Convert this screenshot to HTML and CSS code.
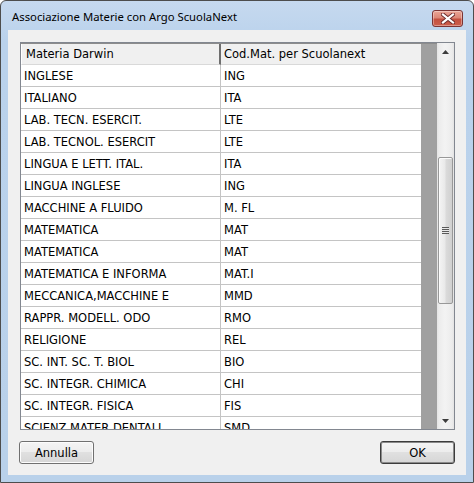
FILE: index.html
```html
<!DOCTYPE html>
<html>
<head>
<meta charset="utf-8">
<link rel="stylesheet" href="styles.css">
</head>
<body>
<div class="window">
  <div class="titlebar">
    <span class="title">Associazione Materie con Argo ScuolaNext</span>
    <div class="close">
      <svg width="14" height="11" viewBox="0 0 14 11">
        <path d="M2 1.5 L12 9.5 M12 1.5 L2 9.5" stroke="#6b2a2a" stroke-width="4" stroke-linecap="square" fill="none"/>
        <path d="M2 1.5 L12 9.5 M12 1.5 L2 9.5" stroke="#ffffff" stroke-width="2.2" stroke-linecap="square" fill="none"/>
      </svg>
    </div>
  </div>
  <div class="client">
    <div class="grid">
      <div class="table">
        <div class="head">
          <div class="hcell c1">Materia Darwin</div>
          <div class="hcell c2">Cod.Mat. per Scuolanext</div>
        </div>
        <div class="row"><div class="cell c1">INGLESE</div><div class="cell c2">ING</div></div>
        <div class="row"><div class="cell c1">ITALIANO</div><div class="cell c2">ITA</div></div>
        <div class="row"><div class="cell c1">LAB. TECN. ESERCIT.</div><div class="cell c2">LTE</div></div>
        <div class="row"><div class="cell c1">LAB. TECNOL. ESERCIT</div><div class="cell c2">LTE</div></div>
        <div class="row"><div class="cell c1">LINGUA E LETT. ITAL.</div><div class="cell c2">ITA</div></div>
        <div class="row"><div class="cell c1">LINGUA INGLESE</div><div class="cell c2">ING</div></div>
        <div class="row"><div class="cell c1">MACCHINE A FLUIDO</div><div class="cell c2">M. FL</div></div>
        <div class="row"><div class="cell c1">MATEMATICA</div><div class="cell c2">MAT</div></div>
        <div class="row"><div class="cell c1">MATEMATICA</div><div class="cell c2">MAT</div></div>
        <div class="row"><div class="cell c1">MATEMATICA E INFORMA</div><div class="cell c2">MAT.I</div></div>
        <div class="row"><div class="cell c1">MECCANICA,MACCHINE E</div><div class="cell c2">MMD</div></div>
        <div class="row"><div class="cell c1">RAPPR. MODELL. ODO</div><div class="cell c2">RMO</div></div>
        <div class="row"><div class="cell c1">RELIGIONE</div><div class="cell c2">REL</div></div>
        <div class="row"><div class="cell c1">SC. INT. SC. T. BIOL</div><div class="cell c2">BIO</div></div>
        <div class="row"><div class="cell c1">SC. INTEGR. CHIMICA</div><div class="cell c2">CHI</div></div>
        <div class="row"><div class="cell c1">SC. INTEGR. FISICA</div><div class="cell c2">FIS</div></div>
        <div class="row"><div class="cell c1">SCIENZ MATER DENTALI</div><div class="cell c2">SMD</div></div>
      </div>
      <div class="vscroll">
        <div class="arrow">
          <svg width="7" height="4" viewBox="0 0 7 4"><path d="M3.5 0 L7 4 L0 4 Z" fill="#3c3c3c"/></svg>
        </div>
        <div class="track">
          <div class="thumb"><div class="grip"></div></div>
        </div>
        <div class="arrow">
          <svg width="7" height="4" viewBox="0 0 7 4"><path d="M0 0 L7 0 L3.5 4 Z" fill="#3c3c3c"/></svg>
        </div>
      </div>
    </div>
    <div class="buttons">
      <div class="btn">Annulla</div>
      <div class="btn default">OK</div>
    </div>
  </div>
</div>
</body>
</html>
```
FILE: styles.css
```css
* { box-sizing: border-box; }
html, body { margin: 0; padding: 0; background: #ffffff; }
body { width: 474px; height: 483px; overflow: hidden; }

.window {
  width: 474px;
  height: 483px;
  border: 1px solid #4d4d4d;
  border-radius: 6px 6px 0 0;
  background: linear-gradient(to bottom, #c6d9ef 0px, #bad2ec 40px, #b9d1ea 100%);
  display: flex;
  flex-direction: column;
  font-family: "DejaVu Sans", sans-serif;
  font-size: 11.5px;
  color: #000;
}

.titlebar {
  height: 29px;
  flex: none;
  display: flex;
  align-items: center;
  justify-content: space-between;
  padding: 0 10px 2px 11px;
}
.title {
  font-family: "Noto Sans", sans-serif;
  font-size: 11.3px;
  color: #000;
  margin-top: 4px;
}
.close {
  width: 31px;
  height: 17px;
  margin-top: 8px;
  border: 1px solid #7b3434;
  border-radius: 3px;
  background: linear-gradient(to bottom, #eba596 0%, #dc8777 45%, #c4503f 55%, #cc5e4b 100%);
  box-shadow: inset 0 0 0 1px rgba(255,255,255,0.35);
  display: flex;
  align-items: center;
  justify-content: center;
}

.client {
  flex: 1;
  margin: 0 7px 7px 7px;
  background: #f0f0f0;
  padding: 12px 11px 11px 11px;
  display: flex;
  flex-direction: column;
}

.grid {
  height: 388px;
  margin-left: 1px;
  border: 1px solid #828790;
  display: flex;
  flex: none;
}
.table {
  width: 416px;
  flex: none;
  background: #a0a0a0;
  overflow: hidden;
  border-top: 1px solid #8c8c8c;
}
.head, .row {
  display: flex;
  width: 400px;
}
.head { height: 21px; }
.hcell {
  height: 21px;
  background: #f0f0f0;
  border-bottom: 1px solid #d9d9d9;
  padding: 3px 0 0 4px;
  white-space: nowrap;
}
.hcell.c1 { width: 200px; border-right: 2px solid #6e6e6e; border-left: 1px solid #ffffff; }
.hcell.c2 { width: 200px; padding-left: 3px; }

.row { height: 22px; }
.cell {
  height: 22px;
  background: #ffffff;
  border-bottom: 1px solid #c4c4c4;
  padding: 4px 0 0 3px;
  white-space: nowrap;
  overflow: hidden;
}
.cell.c1 { width: 200px; border-right: 1px solid #c4c4c4; }
.cell.c2 { width: 200px; }

.vscroll {
  width: 17px;
  flex: none;
  display: flex;
  flex-direction: column;
  background: linear-gradient(to right, #e3e3e3 0, #ececec 2px, #f3f3f3 8px, #ececec 15px, #e3e3e3 17px);
}
.arrow {
  height: 17px;
  flex: none;
  display: flex;
  align-items: center;
  justify-content: center;
}
.track {
  flex: 1;
  padding: 97px 0 0 1px;
}
.thumb {
  width: 15px;
  height: 147px;
  border: 1px solid #989898;
  border-radius: 2px;
  background: linear-gradient(to right, #f4f4f4 0%, #e9e9e9 45%, #dadada 55%, #d0d0d0 100%);
  box-shadow: inset 1px 1px 0 #fbfbfb;
  display: flex;
  align-items: center;
  justify-content: center;
}
.grip {
  width: 7px;
  height: 7px;
  background: repeating-linear-gradient(to bottom, #5a5a5a 0, #5a5a5a 1px, #e8e8e8 1px, #e8e8e8 2px);
}

.buttons {
  margin-top: 11px;
  display: flex;
  justify-content: space-between;
}
.btn {
  width: 75px;
  height: 23px;
  border: 1px solid #707070;
  border-radius: 3px;
  background: linear-gradient(to bottom, #f4f4f4 0%, #ececec 50%, #e0e0e0 50%, #d6d6d6 100%);
  box-shadow: inset 0 0 0 1px #fcfcfc;
  display: flex;
  align-items: center;
  justify-content: center;
  font-family: "DejaVu Sans", sans-serif;
  font-size: 11.5px;
}
.btn.default {
  border: 1px solid #3c3c3c;
  box-shadow: inset 0 0 0 1px #8a8a8a;
}
```
